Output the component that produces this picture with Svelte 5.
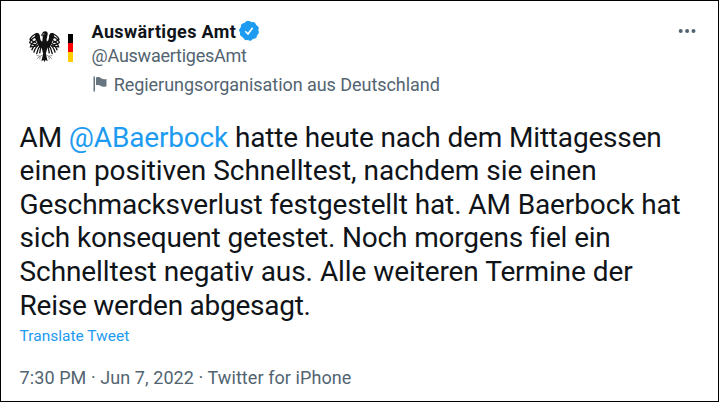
<script>
  const author = {
    name: 'Auswärtiges Amt',
    handle: '@AuswaertigesAmt',
    label: 'Regierungsorganisation aus Deutschland'
  };

  const mention = '@ABaerbock';

  const lines = [
    { before: 'AM ', mention, text: ' hatte heute nach dem Mittagessen', width: 642, spacing: -0.18 },
    { text: 'einen positiven Schnelltest, nachdem sie einen', width: 577, spacing: -0.04 },
    { text: 'Geschmacksverlust festgestellt hat. AM Baerbock hat', width: 661, spacing: -0.12 },
    { text: 'sich konsequent getestet. Noch morgens fiel ein', width: 591, spacing: -0.22 },
    { text: 'Schnelltest negativ aus. Alle weiteren Termine der', width: 613, spacing: -0.12 },
    { text: 'Reise werden abgesagt.', width: 291, spacing: -0.26 }
  ];
</script>

<article class="tweet">
  <header>
    <div class="avatar">
      <svg class="eagle" viewBox="0 0 90 90" aria-hidden="true">
        <defs>
          <g id="wing">
            <path d="M40 32C35 29 32 25 32 18C32 9 28 4 22 6C17 9 16 15 18 22L32 49L40 47Z" />
            <g class="feathers">
              <path d="M23 7Q8 13 3 24Q10 31 21 34" />
              <path d="M19 17Q3 25 2 34Q12 40 24 41" />
              <path d="M21 28Q7 34 4 46Q13 45 24 44" />
              <path d="M27 34Q13 41 8 56" />
              <path d="M30 38Q18 47 14 63" />
              <path d="M34 40Q25 50 22 67" />
              <path d="M38 40Q32 52 31 65" />
            </g>
            <path class="claw" d="M40 69L28 76M32 73L22 71M31 74L23 81M33 73L31 83" />
          </g>
        </defs>
        <use href="#wing" />
        <use href="#wing" transform="matrix(-1 0 0 1 90 0)" />
        <path d="M39 27L40 17L34 13L38 7Q40 1 47 1Q56 2 54 11L51 24L54 46L49 66L54 88L48 84L45 90L42 84L36 88L41 66L36 46Z" />
        <path class="eye" d="M39 9H45M34 14L41 15" />
      </svg>
      <span class="flag"></span>
    </div>

    <div class="author">
      <div class="name">
        <span>{author.name}</span>
        <svg viewBox="0 0 20 20" aria-label="Verified account">
          <path fill="#1d9bf0" d="M10 .5L12.6 1.4L15.5 1.8L17 4.3L19.2 6.2L18.9 9.2L19.5 11.8L17.8 14.1L16.8 16.8L13.9 17.5L11.6 19.4L9 18.6L6 18.6L4.2 16.1L1.8 14.5L1.4 11.5L.5 8.9L2.1 6.4L2.7 3.5L5.5 2.3L7.4 .6Z" stroke="#1d9bf0" stroke-linejoin="round" />
          <path fill="none" stroke="#fff" stroke-width="1.6" d="M6.3 10.3L9 13L13.6 6.8" />
        </svg>
      </div>
      <div class="handle">{author.handle}</div>
      <div class="label">
        <svg viewBox="0 0 14 16" aria-hidden="true">
          <path d="M.5 .5H2V15.5H.5ZM3 1.5C6 .5 7 1.5 8.5 2.5C10 3.4 11.5 3.3 13.5 3V10.2C11 11.2 9 11 7.5 9.8C6 8.8 5 8.7 3 9.2Z" />
        </svg>
        <span>{author.label}</span>
      </div>
    </div>

    <button class="more" aria-label="More">
      <svg viewBox="0 0 18 6"><circle cx="2.7" cy="3" r="2" /><circle cx="9.1" cy="3" r="2" /><circle cx="15.5" cy="3" r="2" /></svg>
    </button>
  </header>

  <div class="text">
    {#each lines as line}
      <div class="line" style="width: {line.width}px; letter-spacing: {line.spacing}px">
        {#if line.mention}{line.before}<span class="mention">{line.mention}</span>{/if}{line.text}
      </div>
    {/each}
  </div>

  <div class="translate">Translate Tweet</div>
  <footer>7:30 PM · Jun 7, 2022 · Twitter for iPhone</footer>
</article>

<style>
  :global(body) {
    margin: 0;
    background: #fff;
  }

  .tweet {
    box-sizing: border-box;
    width: 719px;
    height: 402px;
    padding: 18px 20px 0 18.6px;
    border: 1px solid #000;
    background: #fff;
    color: #0f1419;
    font-family: Roboto, "Liberation Sans", sans-serif;
  }

  header {
    display: flex;
    height: 101.6px;
  }

  .avatar {
    display: flex;
    width: 72px;
    padding: 12px 0 0 9.4px;
    box-sizing: border-box;
  }

  .eagle {
    width: 31px;
    height: 31px;
    fill: #111;
  }

  .feathers {
    fill: none;
    stroke: #111;
    stroke-width: 3.8;
  }

  .claw {
    fill: none;
    stroke: #888;
    stroke-width: 2.3;
  }

  .eye {
    stroke: #fff;
    stroke-width: 2;
  }

  .flag {
    width: 5px;
    height: 28px;
    margin: 3px 0 0 8px;
    background: linear-gradient(#000 33%, #f00 33% 66%, #fc0 66%);
  }

  .author {
    flex: 1;
    font-size: 18px;
    color: #536471;
  }

  .name {
    display: flex;
    align-items: center;
    height: 25px;
    gap: 3px;
    color: #0f1419;
    font-weight: 700;
    letter-spacing: 0.35px;
  }

  .name svg {
    width: 20px;
    height: 20px;
    margin-bottom: 1px;
  }

  .handle {
    height: 24px;
    line-height: 24px;
    letter-spacing: -0.25px;
  }

  .label {
    display: flex;
    align-items: center;
    height: 32px;
    gap: 6.5px;
    letter-spacing: -0.05px;
  }

  .label svg {
    width: 14px;
    height: 16px;
    margin-left: 1.6px;
    fill: #66757f;
  }

  .more {
    align-self: flex-start;
    margin: 9px 2px 0 0;
    padding: 0;
    border: 0;
    background: none;
  }

  .more svg {
    display: block;
    width: 18px;
    height: 6px;
    fill: #536471;
  }

  .text {
    font-size: 28px;
    line-height: 33.6px;
  }

  .line {
    white-space: nowrap;
    text-align-last: justify;
  }

  .mention,
  .translate {
    color: #1d9bf0;
  }

  .translate {
    margin-top: 2.2px;
    font-size: 15.5px;
    line-height: 24px;
  }

  footer {
    margin-top: 16.4px;
    font-size: 18px;
    line-height: 25px;
    letter-spacing: 0.08px;
    color: #536471;
  }
</style>
